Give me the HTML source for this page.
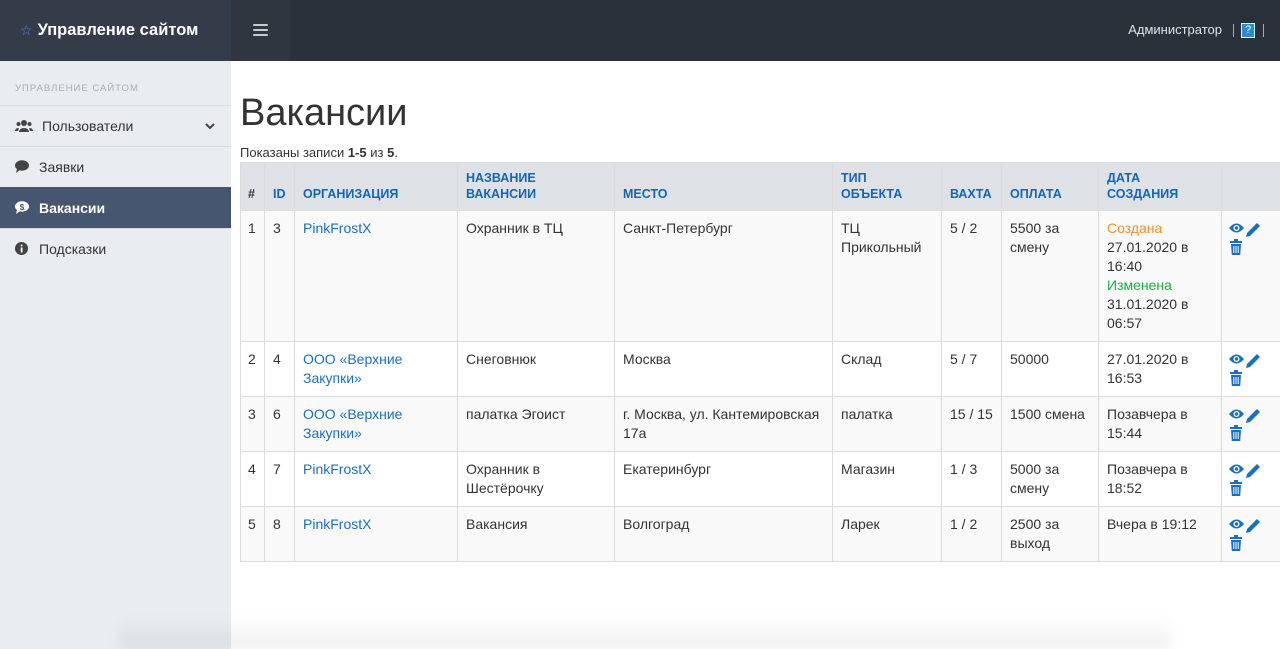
<!DOCTYPE html>
<html><head><meta charset="utf-8"><style>
*{box-sizing:border-box;margin:0;padding:0}
body{width:1280px;height:649px;overflow:hidden;font-family:"Liberation Sans",Arial,sans-serif;font-size:14px;color:#333;background:#fff;position:relative}
.top{position:absolute;left:0;top:0;width:1280px;height:61px;background:#2b313b}
.brand{position:absolute;left:0;top:0;width:231px;height:61px;background:#343c49;color:#fff;font-weight:bold;font-size:16.5px;line-height:61px;padding-left:20px}
.brand span{color:#5a8fd0;font-weight:normal;font-size:14px;margin-right:5px}
.burg{position:absolute;left:231px;top:0;width:59px;height:61px;background:#30363f}
.burg i{position:absolute;left:22px;width:15px;height:2px;background:#c8ccd2;border-radius:1px}
.admin{position:absolute;right:58px;top:22px;color:#dfe3e8;font-size:13px}
.sep{position:absolute;top:24px;width:1px;height:13px;background:#aaa}
.q{position:absolute;left:1241px;top:23px;width:14px;height:15px;background:#2a8bd0;border:1px solid #cfe;color:#fff;font-size:11px;text-align:center;line-height:13px}
.side{position:absolute;left:0;top:61px;width:231px;height:588px;background:#e9edf1}
.side .cap{font-size:9.5px;letter-spacing:1px;color:#a7adb5;padding:22px 0 0 15px;height:44px}
.item{height:41px;border-top:1px solid #d8dde3;line-height:40px;padding-left:15px;color:#333;font-size:14px;position:relative}
.item svg{position:absolute;left:15px;top:13px}
.item .t{position:absolute;left:39px}
.item.act{background:#465670;color:#fff;font-weight:bold;border-top-color:#465670}
h1{position:absolute;left:240px;top:92px;font-size:38px;font-weight:normal;color:#333}
.sum{position:absolute;left:240px;top:145px;font-size:13px}
table{position:absolute;left:240px;top:162px;width:1040px;border-collapse:collapse;table-layout:fixed}
th,td{border:1px solid #dcdcdc;vertical-align:top;text-align:left;line-height:19px}
th{background:#dee2e7;color:#1565b3;font-size:12.5px;font-weight:bold;vertical-align:bottom;padding:7px 8px 8px;height:48px;line-height:16px}
th:first-child{color:#333}
td{padding:8px 8px 8px;font-size:14px}
tr:nth-child(even) td{background:#f9f9f9}
a{color:#1a6fc0;text-decoration:none}
.or{color:#f0902a}.gr{color:#19b040}
.ic{padding:8px 6px}
.shadow{position:absolute;left:120px;top:618px;width:1050px;height:31px;background:linear-gradient(rgba(0,0,0,0),rgba(0,0,0,0.07));filter:blur(6px)}
</style></head><body>
<div class="top"></div>
<div class="brand"><span>☆</span>Управление сайтом</div>
<div class="burg"><i style="top:24px"></i><i style="top:29px"></i><i style="top:34px"></i></div>
<div class="admin">Администратор</div>
<div class="sep" style="left:1233px"></div><div class="sep" style="left:1263px"></div>
<div class="q">?</div>
<div class="side">
<div class="cap">УПРАВЛЕНИЕ САЙТОМ</div>
<div class="item"><svg width="18" height="14" viewBox="0 0 18 14"><circle cx="9" cy="4" r="3" fill="#444"/><circle cx="3.5" cy="5" r="2" fill="#444"/><circle cx="14.5" cy="5" r="2" fill="#444"/><path d="M4 13a5 4 0 0 1 10 0z" fill="#444"/><path d="M0 12a3.5 3 0 0 1 4-3l-1 3z M18 12a3.5 3 0 0 0-4-3l1 3z" fill="#444"/></svg><span class="t" style="left:42px">Пользователи</span><svg width="10" height="7" viewBox="0 0 10 7" style="left:205px;top:17px"><path d="M1 1l4 4 4-4" stroke="#444" stroke-width="2" fill="none"/></svg></div>
<div class="item"><svg width="14" height="13" viewBox="0 0 14 13"><ellipse cx="7" cy="5.5" rx="7" ry="5.2" fill="#444"/><path d="M2 9 L1 13 L5 10z" fill="#444"/></svg><span class="t">Заявки</span></div>
<div class="item act"><svg width="14" height="13" viewBox="0 0 14 13"><ellipse cx="7" cy="5.5" rx="7" ry="5.2" fill="#fff"/><path d="M2 9 L1 13 L5 10z" fill="#fff"/><text x="7" y="9" font-size="8" text-anchor="middle" fill="#465670" font-weight="bold" font-family="Liberation Sans">$</text></svg><span class="t">Вакансии</span></div>
<div class="item"><svg width="13" height="13" viewBox="0 0 13 13"><circle cx="6.5" cy="6.5" r="6.5" fill="#444"/><rect x="5.7" y="5.5" width="1.8" height="5" fill="#fff"/><circle cx="6.6" cy="3.5" r="1" fill="#fff"/></svg><span class="t">Подсказки</span></div>
</div>
<h1>Вакансии</h1>
<div class="sum">Показаны записи <b>1-5</b> из <b>5</b>.</div>
<table>
<colgroup><col style="width:24px"><col style="width:30px"><col style="width:163px"><col style="width:157px"><col style="width:218px"><col style="width:109px"><col style="width:60px"><col style="width:97px"><col style="width:123px"><col style="width:59px"></colgroup>
<tr><th style="padding-left:7px">#</th><th>ID</th><th>ОРГАНИЗАЦИЯ</th><th>НАЗВАНИЕ ВАКАНСИИ</th><th>МЕСТО</th><th>ТИП<br>ОБЪЕКТА</th><th>ВАХТА</th><th>ОПЛАТА</th><th>ДАТА СОЗДАНИЯ</th><th></th></tr>
<tr style="height:131px"><td style="padding-left:7px">1</td><td>3</td><td><a>PinkFrostX</a></td><td>Охранник в ТЦ</td><td>Санкт-Петербург</td><td>ТЦ Прикольный</td><td>5 / 2</td><td>5500 за смену</td><td><span class="or">Создана</span><br>27.01.2020 в 16:40<br><span class="gr">Изменена</span><br>31.01.2020 в 06:57</td><td class="ic">ICONS</td></tr>
<tr style="height:55px"><td style="padding-left:7px">2</td><td>4</td><td><a>ООО «Верхние Закупки»</a></td><td>Снеговнюк</td><td>Москва</td><td>Склад</td><td>5 / 7</td><td>50000</td><td>27.01.2020 в 16:53</td><td class="ic">ICONS</td></tr>
<tr style="height:55px"><td style="padding-left:7px">3</td><td>6</td><td><a>ООО «Верхние Закупки»</a></td><td>палатка Эгоист</td><td>г. Москва, ул. Кантемировская 17а</td><td>палатка</td><td>15 / 15</td><td>1500 смена</td><td>Позавчера в 15:44</td><td class="ic">ICONS</td></tr>
<tr style="height:55px"><td style="padding-left:7px">4</td><td>7</td><td><a>PinkFrostX</a></td><td>Охранник в Шестёрочку</td><td>Екатеринбург</td><td>Магазин</td><td>1 / 3</td><td>5000 за смену</td><td>Позавчера в 18:52</td><td class="ic">ICONS</td></tr>
<tr style="height:55px"><td style="padding-left:7px">5</td><td>8</td><td><a>PinkFrostX</a></td><td>Вакансия</td><td>Волгоград</td><td>Ларек</td><td>1 / 2</td><td>2500 за выход</td><td>Вчера в 19:12</td><td class="ic">ICONS</td></tr>
</table>
<div class="shadow"></div>
<script>
var ic='<svg width="36" height="36" viewBox="0 0 36 36" style="display:block;margin-top:2px;margin-left:1px"><path d="M0 7 Q7.5 -2 15 7 Q7.5 16 0 7z" fill="#1a6fc0"/><circle cx="7.5" cy="7" r="3" fill="#fff"/><circle cx="7.5" cy="7" r="1.7" fill="#1a6fc0"/><path d="M17 16 L18 12 L28 2 L31 5 L21 15z" fill="#1a6fc0"/><rect x="1" y="20" width="12" height="2" fill="#1a6fc0"/><rect x="5" y="18" width="4" height="2" fill="#1a6fc0"/><path d="M2 23h10l-0.8 11h-8.4z" fill="#1a6fc0"/><path d="M4.8 25v7M7 25v7M9.2 25v7" stroke="#fff" stroke-width="1"/></svg>';
document.querySelectorAll('td.ic').forEach(function(t){t.innerHTML=ic});
</script>
</body></html>
